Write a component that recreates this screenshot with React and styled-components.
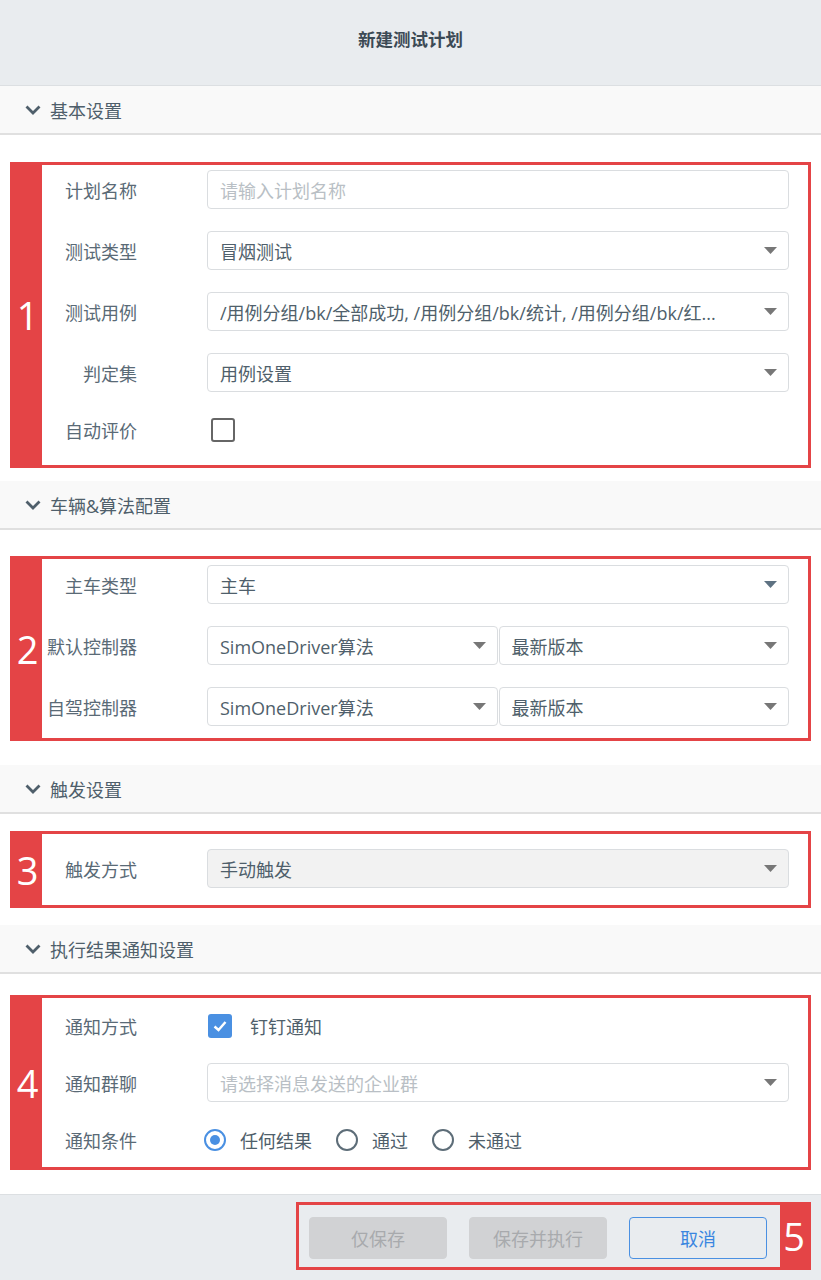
import styled, { createGlobalStyle } from 'styled-components';

const RED = '#e44446';
const BLUE = '#4a90e2';

const GlobalStyle = createGlobalStyle`
  html, body {
    margin: 0;
    padding: 0;
    background: #fff;
  }
  body {
    font-family: 'Open Sans', 'Noto Sans CJK SC', sans-serif;
    color: #52626e;
  }
`;

const Chevron = () => (
  <svg width="16" height="10" viewBox="0 0 16 10">
    <polyline points="1.5,1.5 8,8 14.5,1.5" fill="none" stroke="#4f5f6b" strokeWidth="2.8" />
  </svg>
);

const Caret = ({ color = '#777' }) => (
  <svg width="13" height="7" viewBox="0 0 13 7">
    <polygon points="0,0 13,0 6.5,7" fill={color} />
  </svg>
);

const CheckBox = ({ checked, shift = 4 }) => (
  <Box $checked={checked} $shift={shift}>
    {checked && (
      <svg width="18" height="18" viewBox="0 0 18 18">
        <polyline points="3.5,9.5 7.5,13 14.5,5" fill="none" stroke="#fff" strokeWidth="2.4" />
      </svg>
    )}
  </Box>
);

const Select = ({ value, placeholder, disabled, caretColor }) => (
  <Field $disabled={disabled}>
    <FieldText $placeholder={!value}>{value || placeholder}</FieldText>
    <Caret color={caretColor} />
  </Field>
);

const Section = ({ title, children, top, bottom }) => (
  <>
    <SectionHeader>
      <Chevron />
      <span>{title}</span>
    </SectionHeader>
    <SectionBody $top={top} $bottom={bottom}>{children}</SectionBody>
  </>
);

const App = () => {
  return (
    <Page>
      <GlobalStyle />
      <TitleBar>新建测试计划</TitleBar>

      <Section title="基本设置" top={27} bottom={13}>
        <Marked>
          <Num>1</Num>
          <Rows $pt={5} $pb={19}>
            <Row>
              <Label>计划名称</Label>
              <Field><FieldText $placeholder>请输入计划名称</FieldText></Field>
            </Row>
            <Row>
              <Label>测试类型</Label>
              <Select value="冒烟测试" />
            </Row>
            <Row>
              <Label>测试用例</Label>
              <Select value="/用例分组/bk/全部成功, /用例分组/bk/统计, /用例分组/bk/红..." />
            </Row>
            <Row>
              <Label>判定集</Label>
              <Select value="用例设置" />
            </Row>
            <Row $h={32}>
              <Label>自动评价</Label>
              <div><CheckBox /></div>
            </Row>
          </Rows>
        </Marked>
      </Section>

      <Section title="车辆&算法配置" top={26} bottom={24}>
        <Marked>
          <Num>2</Num>
          <Rows $pt={6} $pb={12}>
            <Row>
              <Label>主车类型</Label>
              <Select value="主车" caretColor="#5e7282" />
            </Row>
            <Row>
              <Label>默认控制器</Label>
              <Pair>
                <Select value="SimOneDriver算法" />
                <Select value="最新版本" />
              </Pair>
            </Row>
            <Row>
              <Label>自驾控制器</Label>
              <Pair>
                <Select value="SimOneDriver算法" />
                <Select value="最新版本" />
              </Pair>
            </Row>
          </Rows>
        </Marked>
      </Section>

      <Section title="触发设置" top={17} bottom={17}>
        <Marked>
          <Num>3</Num>
          <Rows $pt={15} $pb={17}>
            <Row>
              <Label>触发方式</Label>
              <Select value="手动触发" disabled />
            </Row>
          </Rows>
        </Marked>
      </Section>

      <Section title="执行结果通知设置" top={21} bottom={24}>
        <Marked>
          <Num>4</Num>
          <Rows $pt={8} $pb={8} $gap={18}>
            <Row>
              <Label>通知方式</Label>
              <Inline>
                <CheckBox checked shift={1} />
                <OptionText $ml={18}>钉钉通知</OptionText>
              </Inline>
            </Row>
            <Row>
              <Label>通知群聊</Label>
              <Select placeholder="请选择消息发送的企业群" />
            </Row>
            <Row>
              <Label>通知条件</Label>
              <Inline $shift={-3}>
                <Radio $checked />
                <OptionText $ml={14}>任何结果</OptionText>
                <Radio $ml={24} />
                <OptionText $ml={14}>通过</OptionText>
                <Radio $ml={24} />
                <OptionText $ml={14}>未通过</OptionText>
              </Inline>
            </Row>
          </Rows>
        </Marked>
      </Section>

      <Footer>
        <Marked $reverse $flush>
          <Num $narrow>5</Num>
          <Actions>
            <Button disabled>仅保存</Button>
            <Button disabled>保存并执行</Button>
            <Button $outline>取消</Button>
          </Actions>
        </Marked>
      </Footer>
    </Page>
  );
};

const Page = styled.div`
  width: 821px;
  min-height: 1280px;
  display: flex;
  flex-direction: column;
  background: #fff;
`;

const TitleBar = styled.div`
  height: 86px;
  box-sizing: border-box;
  border-bottom: 1px solid #dcdfe2;
  background: #e9ecef;
  display: flex;
  align-items: center;
  justify-content: center;
  padding-bottom: 9px;
  font-size: 17.5px;
  font-weight: 700;
  color: #3c4a55;
`;

const SectionHeader = styled.div`
  height: 47px;
  border-bottom: 2px solid #e0e0e0;
  background: #f9f9f9;
  display: flex;
  align-items: center;
  gap: 9px;
  padding-left: 25px;
  font-size: 18px;
  color: #4f5f6b;

  svg {
    margin-top: 1px;
  }
`;

const SectionBody = styled.div`
  padding: ${p => p.$top}px 10px ${p => p.$bottom}px;
`;

const Marked = styled.div`
  display: flex;
  flex-direction: ${p => (p.$reverse ? 'row-reverse' : 'row')};
  border: 3px solid ${RED};
  background: ${p => (p.$flush ? 'transparent' : '#fff')};
`;

const Num = styled.div`
  width: ${p => (p.$narrow ? 28 : 29)}px;
  flex-shrink: 0;
  background: ${RED};
  color: #fff;
  display: flex;
  align-items: center;
  justify-content: center;
  font-family: 'Open Sans', sans-serif;
  font-size: 38px;
  font-weight: 400;
  line-height: 1;
`;

const Rows = styled.div`
  flex: 1;
  display: flex;
  flex-direction: column;
  gap: ${p => p.$gap ?? 22}px;
  padding: ${p => p.$pt}px 19px ${p => p.$pb}px 0;
`;

const Row = styled.div`
  display: grid;
  grid-template-columns: 95px 1fr;
  column-gap: 70px;
  align-items: center;
  height: ${p => p.$h ?? 39}px;
`;

const Label = styled.div`
  text-align: right;
  font-size: 18px;
  color: #5a6a76;
  white-space: nowrap;
`;

const Field = styled.div`
  flex: 1;
  min-width: 0;
  height: 39px;
  box-sizing: border-box;
  border: 1px solid #dadde0;
  border-radius: 4px;
  background: ${p => (p.$disabled ? '#f2f2f2' : '#fff')};
  display: flex;
  align-items: center;
  padding: 0 11px 0 12px;
  gap: 10px;
`;

const FieldText = styled.div`
  flex: 1;
  min-width: 0;
  font-size: 18px;
  color: ${p => (p.$placeholder ? '#b9bfc5' : '#4f5f6b')};
  white-space: nowrap;
  overflow: hidden;
  text-overflow: ellipsis;
`;

const Pair = styled.div`
  display: flex;
  gap: 1px;
`;

const Box = styled.div`
  width: 24px;
  height: 24px;
  box-sizing: border-box;
  margin-left: ${p => p.$shift}px;
  border-radius: 3px;
  border: ${p => (p.$checked ? 'none' : '2.5px solid #666')};
  background: ${p => (p.$checked ? BLUE : '#fff')};
  display: flex;
  align-items: center;
  justify-content: center;
`;

const Inline = styled.div`
  display: flex;
  align-items: center;
  margin-left: ${p => p.$shift ?? 0}px;
`;

const OptionText = styled.span`
  margin-left: ${p => p.$ml}px;
  font-size: 18px;
  color: #4f5f6b;
`;

const Radio = styled.span`
  width: 22px;
  height: 22px;
  box-sizing: border-box;
  margin-left: ${p => p.$ml ?? 0}px;
  border-radius: 50%;
  border: 2px solid ${p => (p.$checked ? BLUE : '#5d6d78')};
  display: flex;
  align-items: center;
  justify-content: center;

  &::after {
    content: '';
    display: ${p => (p.$checked ? 'block' : 'none')};
    width: 10px;
    height: 10px;
    border-radius: 50%;
    background: ${BLUE};
  }
`;

const Footer = styled.div`
  margin-top: auto;
  height: 86px;
  box-sizing: border-box;
  border-top: 1px solid #dcdfe2;
  background: #e9ecef;
  display: flex;
  justify-content: flex-end;
  padding: 7px 10px 10px 0;
`;

const Actions = styled.div`
  display: flex;
  gap: 22px;
  padding: 12px 13px 8px 10px;
`;

const Button = styled.button`
  width: 138px;
  height: 42px;
  border-radius: 4px;
  font-family: 'Open Sans', 'Noto Sans CJK SC', sans-serif;
  font-size: 18px;
  cursor: pointer;
  border: 1px solid ${p => (p.$outline ? BLUE : '#d1d2d4')};
  background: ${p => (p.$outline ? 'transparent' : '#d1d2d4')};
  color: ${p => (p.$outline ? '#3a86e0' : '#a8aaad')};

  &:disabled {
    cursor: default;
  }
`;

export default App;
